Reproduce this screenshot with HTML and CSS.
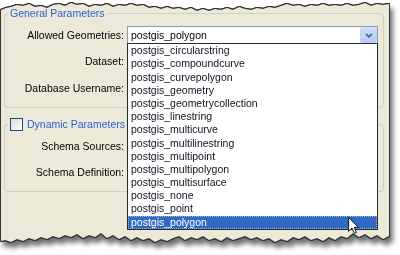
FILE: index.html
```html
<!DOCTYPE html>
<html lang="en">
<head>
    <meta charset="UTF-8">
    <meta name="viewport" content="width=device-width, initial-scale=1.0">
    <title>Reader Parameters</title>
    <link rel="stylesheet" href="styles.css">
</head>
<body>
    <div class="sheet">
    <div class="paper">
        <!-- first group -->
        <fieldset class="group">
            <legend class="group_title">General Parameters</legend>
            <div class="form">
                <label class="field_label">Allowed Geometries:</label>
                <div class="combo">
                    <span class="combo_value">postgis_polygon</span>
                    <span class="combo_button">
                        <svg width="8" height="5" viewBox="0 0 8 5"><path d="M1 0.8 L4 3.8 L7 0.8" fill="none" stroke="#4d6185" stroke-width="1.7"/></svg>
                    </span>
                    <ul class="dropdown">
                        <li>postgis_circularstring</li>
                        <li>postgis_compoundcurve</li>
                        <li>postgis_curvepolygon</li>
                        <li>postgis_geometry</li>
                        <li>postgis_geometrycollection</li>
                        <li>postgis_linestring</li>
                        <li>postgis_multicurve</li>
                        <li>postgis_multilinestring</li>
                        <li>postgis_multipoint</li>
                        <li>postgis_multipolygon</li>
                        <li>postgis_multisurface</li>
                        <li>postgis_none</li>
                        <li>postgis_point</li>
                        <li class="selected">postgis_polygon</li>
                    </ul>
                </div>
                <label class="field_label">Dataset:</label>
                <div class="textbox"></div>
                <label class="field_label">Database Username:</label>
                <div class="textbox"></div>
            </div>
        </fieldset>

        <!-- second group -->
        <fieldset class="group group_second">
            <legend class="group_title"><span class="checkbox"></span>Dynamic Parameters</legend>
            <div class="form form_short">
                <label class="field_label">Schema Sources:</label>
                <div class="textbox"></div>
                <label class="field_label">Schema Definition:</label>
                <div class="textbox"></div>
            </div>
        </fieldset>

        <svg class="cursor" width="11" height="17" viewBox="0 0 12 19">
            <path d="M0.5 0.5 V16 L4.3 12.3 L7 18.3 L9.3 17.3 L6.7 11.5 H11.5 Z" fill="#fff" stroke="#000" stroke-width="1" stroke-linejoin="round"/>
        </svg>
    </div>
    </div>
</body>
</html>
```

FILE: styles.css
```css
body{
    margin: 0;
    background-color: #fff;
    font-family: "Liberation Sans", Arial, sans-serif;
    font-size: 10.5px;
    line-height: 13.2px;
    color: #000;
}
.sheet{
    width: 396px;
    height: 255px;
    filter: drop-shadow(1px 0 0 #333) drop-shadow(-1px 0 0 #333) drop-shadow(0 1px 0 #333) drop-shadow(0 -1px 0 #333) drop-shadow(3px 5px 2.5px rgba(0, 0, 0, 0.55));
}
.paper{
    position: relative;
    margin-left: 1px;
    width: 388px;
    height: 248px;
    box-sizing: border-box;
    padding: 7px 5px 0 3px;
    background-color: #ece9d8;
    clip-path: polygon(
        0 10px, 5px 8px, 10px 7px, 16px 5px, 22px 6px, 28px 4px, 34px 7px, 40px 6px, 46px 8px, 52px 5px,
        58px 4px, 64px 6px, 70px 3px, 76px 5px, 82px 4px, 88px 7px, 94px 5px, 100px 6px, 106px 4px, 112px 7px,
        118px 5px, 124px 6px, 130px 4px, 136px 6px, 142px 5px, 148px 8px, 154px 7px, 160px 9px, 166px 7px, 172px 9px,
        178px 8px, 184px 10px, 190px 8px, 196px 11px, 202px 9px, 208px 11px, 214px 9px, 220px 10px, 226px 8px, 232px 10px,
        238px 7px, 244px 9px, 250px 10px, 256px 8px, 262px 9px, 268px 7px, 274px 8px, 280px 6px, 286px 4px, 292px 6px,
        298px 5px, 304px 7px, 310px 5px, 316px 6px, 322px 4px, 328px 6px, 334px 5px, 340px 6px, 346px 4px, 352px 6px,
        358px 5px, 364px 3px, 370px 6px, 376px 4px, 382px 5px, 388px 4px,
        388px 236px, 382px 239px, 376px 235px, 370px 238px, 364px 234px, 358px 237px, 352px 233px, 346px 238px,
        340px 236px, 334px 240px, 328px 237px, 322px 241px, 316px 238px, 310px 240px, 304px 236px, 298px 239px,
        292px 237px, 286px 241px, 280px 239px, 274px 242px, 268px 238px, 262px 240px, 256px 237px, 250px 239px,
        244px 236px, 238px 238px, 232px 240px, 226px 237px, 220px 241px, 214px 238px, 208px 240px, 202px 236px,
        196px 239px, 190px 237px, 184px 240px, 178px 236px, 172px 238px, 166px 241px, 160px 239px, 154px 242px,
        148px 238px, 142px 240px, 136px 237px, 130px 240px, 124px 236px, 118px 239px, 112px 235px, 106px 238px,
        100px 233px, 94px 237px, 88px 235px, 82px 238px, 76px 234px, 70px 237px, 64px 235px, 58px 238px,
        52px 236px, 46px 239px, 40px 237px, 34px 240px, 28px 238px, 22px 241px, 16px 239px, 10px 242px,
        4px 240px, 0 241px
    );
}
.group{
    margin: 0;
    padding: 6px 5px 10px 5px;
    border: 1px solid #d0d0bf;
    border-radius: 4px;
    min-inline-size: 0;
}
.group_second{
    margin-top: 10px;
}
.group_title{
    display: flex;
    align-items: center;
    gap: 4px;
    padding: 0 2px;
    margin-left: -2px;
    color: #2a5fd8;
}
.checkbox{
    width: 11px;
    height: 11px;
    border: 1px solid #1c5180;
    background: linear-gradient(135deg, #dcdcd6, #fff);
}
.form{
    display: grid;
    grid-template-columns: 114px 1fr;
    grid-auto-rows: 18px;
    column-gap: 3px;
    row-gap: 8.5px;
}
.form_short{
    row-gap: 8px;
}
.field_label{
    align-self: center;
    text-align: right;
    white-space: nowrap;
}
.textbox{
    border: 1px solid #7f9db9;
    background-color: #fff;
}
.combo{
    position: relative;
    display: flex;
    align-items: center;
    border: 1px solid #7f9db9;
    background-color: #fff;
}
.combo_value{
    flex: 1;
    padding-left: 3px;
}
.combo_button{
    display: flex;
    align-items: center;
    justify-content: center;
    align-self: stretch;
    width: 17px;
    border-radius: 2px;
    background: linear-gradient(#cfdcf9, #b9cbf4);
}
.dropdown{
    position: absolute;
    top: 100%;
    left: -1px;
    right: -1px;
    z-index: 5;
    margin: 0;
    padding: 0;
    list-style: none;
    border: 1px solid #2b2b2b;
    background-color: #fff;
}
.dropdown li{
    height: 13.2px;
    padding-left: 3px;
    color: #141020;
    white-space: nowrap;
}
.dropdown li.selected{
    background-color: #316ac5;
    color: #fff;
    outline: 1px dotted #9fb3dc;
    outline-offset: -1px;
}
.cursor{
    position: absolute;
    left: 347px;
    top: 217px;
    z-index: 10;
}
```
